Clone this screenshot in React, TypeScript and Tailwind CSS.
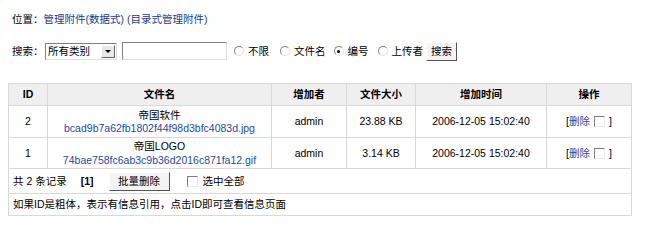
const FONT = { fontFamily: '"Liberation Sans", "Noto Sans CJK SC", sans-serif' };

const rows = [
  { id: "2", title: "帝国软件", file: "bcad9b7a62fb1802f44f98d3bfc4083d.jpg", user: "admin", size: "23.88 KB", time: "2006-12-05 15:02:40" },
  { id: "1", title: "帝国LOGO", file: "74bae758fc6ab3c9b36d2016c871fa12.gif", user: "admin", size: "3.14 KB", time: "2006-12-05 15:02:40" },
];

const Radio = ({ checked = false }: { checked?: boolean }) => (
  <span className="inline-flex items-center justify-center w-[10px] h-[10px] rounded-full border border-t-[#808080] border-l-[#808080] border-r-[#e0e0e0] border-b-[#e0e0e0] bg-white">
    {checked && <span className="w-[3px] h-[3px] rounded-full bg-black" />}
  </span>
);

const Check = () => (
  <span className="inline-block w-[11px] h-[11px] border border-t-[#808080] border-l-[#808080] border-r-[#e8e8e8] border-b-[#e8e8e8] bg-white" />
);

const Btn = ({ children, className = "" }: { children: React.ReactNode; className?: string }) => (
  <span
    className={`inline-flex items-center justify-center bg-[#f4f4f4] border border-t-white border-l-white border-r-[#555] border-b-[#555] ${className}`}
  >
    {children}
  </span>
);

export default function App() {
  return (
    <div className="w-[650px] h-[249px] bg-white text-[10.5px] text-black leading-none" style={FONT}>
      <div className="pl-[12px] pt-[14px] h-[39px]">
        位置：<span className="text-[#1a3a88]">管理附件(数据式)</span>{" "}
        <span className="text-[#1a3a88]">(目录式管理附件)</span>
      </div>

      <div className="flex items-center pl-[12px] h-[24px]">
        <span className="w-[33px]">搜索：</span>
        <span className="flex items-center w-[72px] h-[17px] border border-t-[#808080] border-l-[#808080] border-r-[#ddd] border-b-[#ddd] bg-white">
          <span className="flex-1 pl-[2px]">所有类别</span>
          <span className="w-[14px] h-[13px] mr-[1px] flex items-center justify-center bg-[#e8e8e8] border border-t-white border-l-white border-r-[#666] border-b-[#666]">
            <span className="w-0 h-0 border-l-[3px] border-r-[3px] border-t-[3px] border-l-transparent border-r-transparent border-t-black" />
          </span>
        </span>
        <span className="ml-[5px] w-[105px] h-[18px] border border-t-[#808080] border-l-[#808080] border-r-[#ddd] border-b-[#ddd] bg-white" />
        <span className="ml-[7px] flex items-center gap-[4px]"><Radio />不限</span>
        <span className="ml-[11px] flex items-center gap-[4px]"><Radio />文件名</span>
        <span className="ml-[8px] flex items-center gap-[4px]"><Radio checked />编号</span>
        <span className="ml-[9px] flex items-center gap-[4px]"><Radio />上传者</span>
        <Btn className="ml-[3px] w-[31px] h-[19px]">搜索</Btn>
      </div>

      <table className="ml-[8px] mt-[20px] w-[624px] border-collapse border border-[#c8c8c8]">
        <thead>
          <tr className="h-[22px] bg-[#efefef] font-bold">
            <th className="w-[39px] border border-[#d8d8d8]">ID</th>
            <th className="w-[224px] border border-[#d8d8d8]">文件名</th>
            <th className="w-[75px] border border-[#d8d8d8]">增加者</th>
            <th className="w-[69px] border border-[#d8d8d8]">文件大小</th>
            <th className="w-[131px] border border-[#d8d8d8]">增加时间</th>
            <th className="border border-[#d8d8d8]">操作</th>
          </tr>
        </thead>
        <tbody>
          {rows.map((r, i) => (
            <tr key={r.id} className={`${i === 0 ? "h-[32px]" : "h-[31px]"} text-center`}>
              <td className="border border-[#d8d8d8]">{r.id}</td>
              <td className="border border-[#d8d8d8]">
                <div>{r.title}</div>
                <div className="mt-[3px] text-[#1f4a9a]">{r.file}</div>
              </td>
              <td className="border border-[#d8d8d8]">{r.user}</td>
              <td className="border border-[#d8d8d8]">{r.size}</td>
              <td className="border border-[#d8d8d8]">{r.time}</td>
              <td className="border border-[#d8d8d8]">
                <span className="inline-flex items-center gap-[4px]">
                  [<span className="text-[#1f4a9a] -ml-[4px]">删除</span>
                  <Check />]
                </span>
              </td>
            </tr>
          ))}
          <tr className="h-[25px]">
            <td colSpan={6} className="border border-[#d8d8d8] pl-[4px]">
              <div className="flex items-center">
                <span>共 2 条记录</span>
                <span className="ml-[14px] font-bold">[1]</span>
                <Btn className="ml-[15px] w-[61px] h-[19px]">批量删除</Btn>
                <span className="ml-[17px] flex items-center gap-[5px]"><Check />选中全部</span>
              </div>
            </td>
          </tr>
          <tr className="h-[22px]">
            <td colSpan={6} className="border border-[#d8d8d8] pl-[4px]">
              如果ID是粗体，表示有信息引用，点击ID即可查看信息页面
            </td>
          </tr>
        </tbody>
      </table>
    </div>
  );
}
